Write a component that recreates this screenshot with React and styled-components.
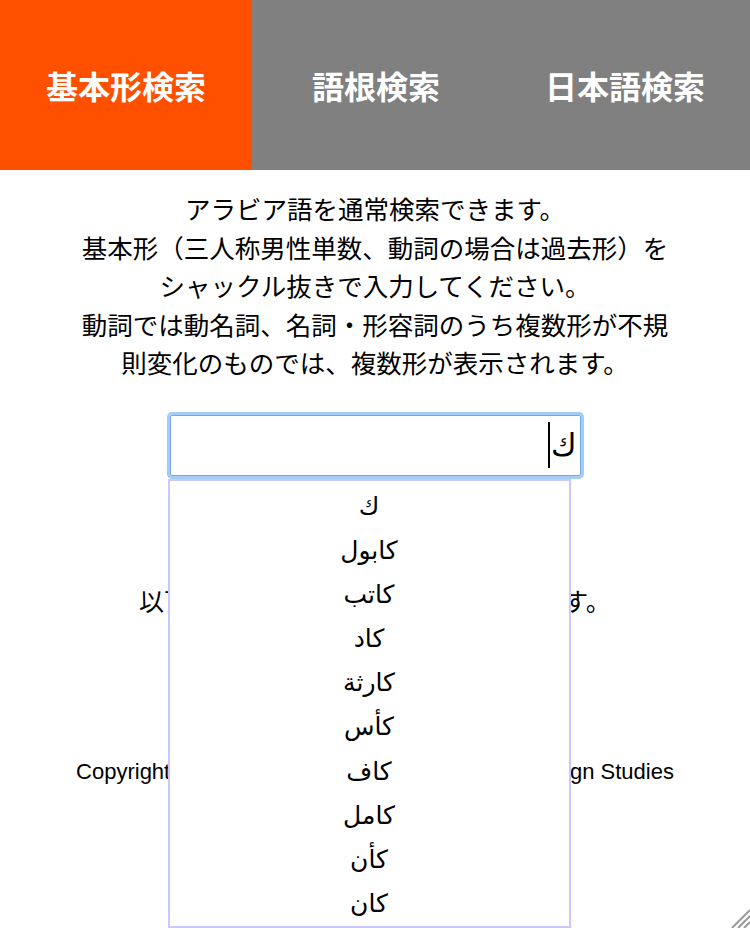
import React from 'react';
import styled, { createGlobalStyle } from 'styled-components';

const GlobalStyle = createGlobalStyle`
  html, body {
    margin: 0;
    padding: 0;
    background: #fff;
  }
  body {
    font-family: "Noto Sans CJK JP", "Noto Sans", sans-serif;
    color: #000;
  }
`;

const Page = styled.div`
  position: relative;
  width: 750px;
  height: 928px;
  overflow: hidden;
  background: #fff;
`;

const Tabs = styled.nav`
  display: grid;
  grid-template-columns: 252px 248px 250px;
  height: 170px;
`;

const Tab = styled.div`
  display: flex;
  align-items: center;
  justify-content: center;
  background: ${p => (p.$active ? '#ff5000' : '#808080')};
  color: #fff;
  font-size: 32px;
  font-weight: 700;
`;

const Intro = styled.p`
  margin: 19px 0 0;
  text-align: center;
  font-size: 25.5px;
  line-height: 38.6px;
`;

const SearchArea = styled.div`
  position: relative;
  width: 411px;
  margin: 33px auto 0;
`;

const Field = styled.div`
  box-sizing: border-box;
  height: 61px;
  border: 1px solid #78a8e2;
  border-radius: 2px;
  box-shadow: 0 0 0 3px #a3ccf7;
  display: flex;
  align-items: center;
  justify-content: flex-end;
  padding-right: 3px;
  font-family: "DejaVu Sans", sans-serif;
  font-size: 31px;
`;

const Caret = styled.span`
  display: inline-block;
  width: 2px;
  height: 46px;
  background: #000;
  margin-right: 1px;
`;

const Suggestions = styled.ul`
  position: absolute;
  top: 64px;
  left: -2px;
  width: 403px;
  box-sizing: border-box;
  margin: 0;
  padding: 4px 0 0;
  list-style: none;
  background: #fff;
  border: 2px solid #c9c9fb;
  z-index: 2;
`;

const Suggestion = styled.li`
  height: 44.1px;
  line-height: 44px;
  text-align: center;
  direction: rtl;
  font-family: "DejaVu Sans", sans-serif;
  font-size: 25px;
`;

const Result = styled.p`
  margin: 106px 0 0;
  text-align: center;
  font-size: 25px;
  line-height: 36px;
`;

const Footer = styled.footer`
  margin-top: 139px;
  text-align: center;
  font-family: "Liberation Sans", Arial, sans-serif;
  font-size: 22px;
  line-height: 30px;
`;

const Grip = styled.svg`
  position: absolute;
  right: 0;
  bottom: 0;
`;

const words = ['ك', 'كابول', 'كاتب', 'كاد', 'كارثة', 'كأس', 'كاف', 'كامل', 'كأن', 'كان'];

export default function App() {
  return (
    <Page>
      <GlobalStyle />
      <Tabs>
        <Tab $active>基本形検索</Tab>
        <Tab>語根検索</Tab>
        <Tab>日本語検索</Tab>
      </Tabs>
      <Intro>
        アラビア語を通常検索できます。<br />
        基本形（三人称男性単数、動詞の場合は過去形）を<br />
        シャックル抜きで入力してください。<br />
        動詞では動名詞、名詞・形容詞のうち複数形が不規<br />
        則変化のものでは、複数形が表示されます。
      </Intro>
      <SearchArea>
        <Field>
          <Caret />
          <span>ك</span>
        </Field>
        <Suggestions>
          {words.map(w => (
            <Suggestion key={w}>{w}</Suggestion>
          ))}
        </Suggestions>
      </SearchArea>
      <Result>以下のフォームから単語を検索できます。</Result>
      <Footer>Copyright © 2016 ILCAA, Tokyo University of Foreign Studies</Footer>
      <Grip width="26" height="28" viewBox="0 0 26 28">
        <g stroke="#9a9a9a" strokeWidth="2">
          <line x1="8" y1="28" x2="26" y2="10" />
          <line x1="14" y1="28" x2="26" y2="16" />
          <line x1="20" y1="28" x2="26" y2="22" />
        </g>
      </Grip>
    </Page>
  );
}
